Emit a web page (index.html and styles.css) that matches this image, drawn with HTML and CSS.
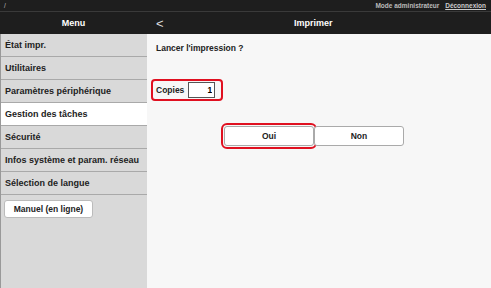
FILE: index.html
```html
<!DOCTYPE html>
<html lang="fr">
<head>
<meta charset="UTF-8">
<meta name="viewport" content="width=device-width, initial-scale=1.0">
<title>Imprimer</title>
<link rel="stylesheet" href="styles.css">
</head>
<body>
    <header class="topbar">
        <span class="path">/</span>
        <div class="user">
            <span>Mode administrateur</span>
            <a href="#">Déconnexion</a>
        </div>
    </header>
    <div class="titlebar">
        <div class="menu-title">Menu</div>
        <div class="page-title">
            <span class="back">&lt;</span>
            <span class="title">Imprimer</span>
        </div>
    </div>
    <div class="layout">
        <aside class="sidebar">
            <ul>
                <li>État impr.</li>
                <li>Utilitaires</li>
                <li>Paramètres périphérique</li>
                <li class="active">Gestion des tâches</li>
                <li>Sécurité</li>
                <li>Infos système et param. réseau</li>
                <li>Sélection de langue</li>
            </ul>
            <button class="manual">Manuel (en ligne)</button>
        </aside>
        <main class="content">
            <p class="question">Lancer l'impression ?</p>
            <div class="copies">
                <label>Copies</label>
                <input type="text" value="1">
            </div>
            <div class="actions">
                <button class="mark">Oui</button>
                <button>Non</button>
            </div>
        </main>
    </div>
</body>
</html>
```

FILE: styles.css
```css
body, html {
    margin: 0;
    padding: 0;
    height: 100%;
}
body {
    display: flex;
    flex-direction: column;
    font-family: 'Liberation Sans', Arial, sans-serif;
    font-weight: bold;
    color: #222;
    background-color: #1e1e1e;
}
.topbar {
    height: 11px;
    display: flex;
    justify-content: space-between;
    align-items: center;
    padding: 0 5px 0 4px;
    font-size: 6.5px;
    color: #bbb;
    border-bottom: 1px solid #3a3a3a;
}
.topbar .path {
    font-weight: normal;
}
.user a {
    color: #ccc;
    margin-left: 4px;
}
.titlebar {
    height: 22px;
    display: flex;
    color: white;
    font-size: 9px;
}
.menu-title {
    width: 147px;
    display: flex;
    align-items: center;
    justify-content: center;
}
.page-title {
    flex: 1;
    display: flex;
    align-items: center;
}
.back {
    font-size: 13px;
    font-weight: normal;
    margin-left: 9px;
    color: #ddd;
}
.title {
    flex: 1;
    text-align: center;
    margin-right: 28px;
}
.layout {
    flex: 1;
    display: flex;
}
.sidebar {
    width: 146px;
    background-color: #d9d9d9;
    border-left: 1px solid #999;
    font-size: 9px;
}
.sidebar ul {
    list-style-type: none;
    margin: 0;
    padding: 0;
}
.sidebar li {
    height: 22px;
    line-height: 22px;
    padding-left: 4px;
    border-bottom: 1px solid #a9a9a9;
}
.sidebar li.active {
    background-color: #fff;
}
.manual {
    margin: 5px 0 0 3px;
    height: 18px;
    width: 89px;
    font: inherit;
    font-size: 8.5px;
    color: #222;
    background: white;
    border: 1px solid #bbb;
    border-radius: 3px;
}
.content {
    flex: 1;
    background-color: #f7f7f7;
    font-size: 8.5px;
}
.question {
    margin: 9px 0 0 9px;
}
.copies {
    margin: 26px 0 0 4px;
    width: 65px;
    height: 18px;
    display: flex;
    align-items: center;
    padding-left: 3px;
    border: 2px solid #e01020;
    border-radius: 4px;
}
.copies input {
    width: 21px;
    height: 14px;
    margin-left: 4px;
    padding: 0 2px;
    border: 1px solid #555;
    font: inherit;
    text-align: right;
}
.mark {
    outline: 2px solid #e01020;
    outline-offset: 1px;
}
.actions {
    margin: 25px 0 0 77px;
    display: flex;
}
.actions button {
    width: 90px;
    height: 20px;
    font: inherit;
    color: #222;
    background: white;
    border: 1px solid #aaa;
    border-radius: 3px;
}
```
